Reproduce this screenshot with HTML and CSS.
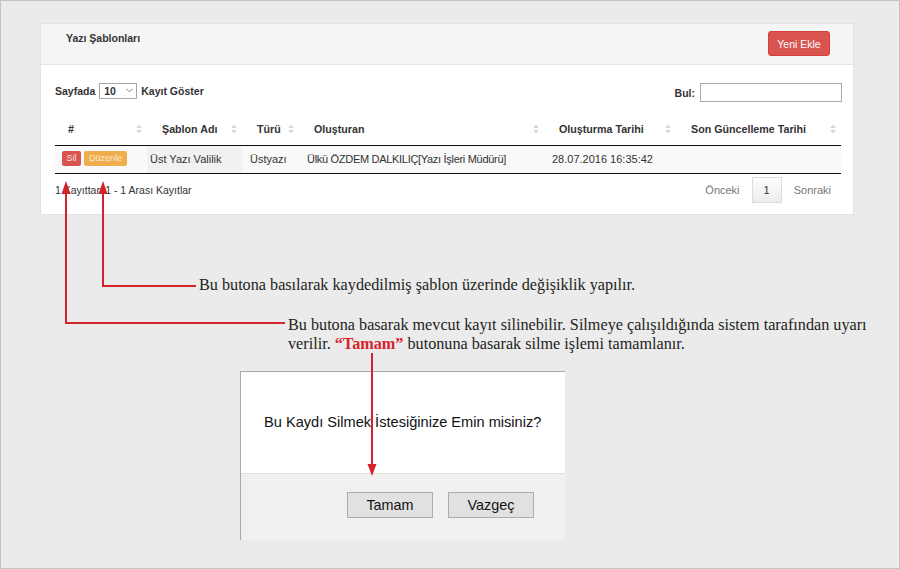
FILE: index.html
```html
<!DOCTYPE html>
<html lang="tr">
<head>
<meta charset="utf-8">
<title>Yazı Şablonları</title>
<link rel="stylesheet" href="styles.css">
</head>
<body>
<div class="frame">
  <section class="panel">
    <header class="panel-head">
      <h2 class="panel-title">Yazı Şablonları</h2>
      <button class="btn-add" type="button">Yeni Ekle</button>
    </header>
    <div class="panel-body">
      <div class="toolbar">
        <div class="len">
          <span>Sayfada</span>
          <span class="select"><span>10</span><svg class="chev" width="7" height="5" viewBox="0 0 7 5"><path d="M0.5 0.8 L3.5 3.8 L6.5 0.8" fill="none" stroke="#777" stroke-width="0.9"/></svg></span>
          <span>Kayıt Göster</span>
        </div>
        <div class="search">
          <span>Bul:</span>
          <input class="search-input" type="text">
        </div>
      </div>
      <table class="grid">
        <colgroup>
          <col class="c1"><col class="c2"><col class="c3"><col class="c4"><col class="c5"><col class="c6">
        </colgroup>
        <thead>
          <tr>
            <th class="first"><div class="th-in"><span>#</span><svg class="sort" width="6" height="10" viewBox="0 0 6 10"><path d="M3 0.5L5.8 4H0.2Z M3 9.5L0.2 6H5.8Z"/></svg></div></th>
            <th><div class="th-in"><span>Şablon Adı</span><svg class="sort" width="6" height="10" viewBox="0 0 6 10"><path d="M3 0.5L5.8 4H0.2Z M3 9.5L0.2 6H5.8Z"/></svg></div></th>
            <th><div class="th-in"><span>Türü</span><svg class="sort" width="6" height="10" viewBox="0 0 6 10"><path d="M3 0.5L5.8 4H0.2Z M3 9.5L0.2 6H5.8Z"/></svg></div></th>
            <th><div class="th-in"><span>Oluşturan</span><svg class="sort" width="6" height="10" viewBox="0 0 6 10"><path d="M3 0.5L5.8 4H0.2Z M3 9.5L0.2 6H5.8Z"/></svg></div></th>
            <th><div class="th-in"><span>Oluşturma Tarihi</span><svg class="sort" width="6" height="10" viewBox="0 0 6 10"><path d="M3 0.5L5.8 4H0.2Z M3 9.5L0.2 6H5.8Z"/></svg></div></th>
            <th><div class="th-in"><span>Son Güncelleme Tarihi</span><svg class="sort" width="6" height="10" viewBox="0 0 6 10"><path d="M3 0.5L5.8 4H0.2Z M3 9.5L0.2 6H5.8Z"/></svg></div></th>
          </tr>
        </thead>
        <tbody>
          <tr>
            <td class="actions"><span class="mini mini-red">Sil</span><span class="mini mini-orange">Düzenle</span></td>
            <td class="sorted">Üst Yazı Valilik</td>
            <td>Üstyazı</td>
            <td class="creator">Ülkü ÖZDEM DALKILIÇ[Yazı İşleri Müdürü]</td>
            <td>28.07.2016 16:35:42</td>
            <td></td>
          </tr>
        </tbody>
      </table>
      <div class="tfoot">
        <div class="info">1 Kayıttan 1 - 1 Arası Kayıtlar</div>
        <div class="pager">
          <span class="pg">Önceki</span>
          <span class="pg pg-cur">1</span>
          <span class="pg">Sonraki</span>
        </div>
      </div>
    </div>
  </section>

  <p class="note note1">Bu butona basılarak kaydedilmiş şablon üzerinde değişiklik yapılır.</p>
  <p class="note note2">Bu butona basarak mevcut kayıt silinebilir. Silmeye çalışıldığında sistem tarafından uyarı<br>verilir. <strong>“Tamam”</strong> butonuna basarak silme işlemi tamamlanır.</p>

  <div class="dialog">
    <div class="dlg-body">Bu Kaydı Silmek İstesiğinize Emin misiniz?</div>
    <div class="dlg-foot">
      <button class="dlg-btn" type="button">Tamam</button>
      <button class="dlg-btn" type="button">Vazgeç</button>
    </div>
  </div>

  <svg class="arrows" width="900" height="569" viewBox="0 0 900 569">
    <g fill="none" stroke="#d3232b" stroke-width="2">
      <path d="M66 192 V323 H285"/>
      <path d="M103 192 V286 H196"/>
      <path d="M372 353 V466"/>
    </g>
    <g fill="#d3232b">
      <polygon points="66,181 61.5,194 70.5,194"/>
      <polygon points="103,181 98.5,194 107.5,194"/>
      <polygon points="372,476 367.5,464 376.5,464"/>
    </g>
  </svg>
</div>
</body>
</html>
```

FILE: styles.css
```css
* { box-sizing: border-box; }

html, body {
  margin: 0;
  padding: 0;
}

body {
  background: #ebebeb;
  font-family: "Liberation Sans", Arial, sans-serif;
  color: #333;
}

.frame {
  position: relative;
  width: 900px;
  height: 569px;
  border: 1px solid #c3c3c3;
  background: #ebebeb;
  padding-top: 22px;
  overflow: hidden;
}

/* ---------- panel ---------- */
.panel {
  width: 814px;
  margin-left: 39px;
  background: #fff;
  border: 1px solid #e2e2e2;
}

.panel-head {
  display: flex;
  justify-content: space-between;
  align-items: flex-start;
  height: 41px;
  background: #f5f5f5;
  border-bottom: 1px solid #e3e3e3;
  padding: 0 23px 0 25px;
}

.panel-title {
  margin: 7px 0 0;
  font-size: 10.5px;
  line-height: 14px;
  font-weight: bold;
  color: #333;
}

.btn-add {
  margin-top: 7px;
  width: 62px;
  height: 25px;
  padding: 0;
  border: 1px solid #d43f3a;
  border-radius: 3px;
  background: #d9534f;
  color: #fff;
  font-family: "Liberation Sans", Arial, sans-serif;
  font-size: 10.5px;
}

.panel-body {
  padding: 18px 12px 11px 14px;
}

.toolbar {
  display: flex;
  justify-content: space-between;
  align-items: center;
  height: 19px;
  font-size: 10.5px;
  font-weight: bold;
  color: #333;
}

.len {
  display: flex;
  align-items: center;
  gap: 4px;
  margin-top: -4px;
}

.select {
  display: flex;
  align-items: center;
  justify-content: space-between;
  width: 38px;
  height: 16px;
  border: 1px solid #a6a6a6;
  padding: 0 3px 0 4px;
  font-weight: bold;
  background: #fff;
}

.chev { display: block; }

.search {
  display: flex;
  align-items: center;
  gap: 5px;
  margin-right: -1px;
}

.search-input {
  width: 142px;
  height: 19px;
  border: 1px solid #aaa;
  margin: 0;
  padding: 0 3px;
  background: #fff;
}

/* ---------- table ---------- */
.grid {
  width: 786px;
  margin-top: 13px;
  border-collapse: collapse;
  table-layout: fixed;
  font-size: 11px;
}

.c1 { width: 92px; }
.c2 { width: 95px; }
.c3 { width: 57px; }
.c4 { width: 245px; }
.c5 { width: 132px; }
.c6 { width: 165px; }

.grid th {
  height: 30px;
  padding: 0 5px 1px 15px;
  border-bottom: 1px solid #111;
  text-align: left;
  font-size: 10.7px;
  font-weight: bold;
  color: #333;
}

.grid th.first { padding-left: 13px; }

.th-in {
  display: flex;
  justify-content: space-between;
  align-items: center;
}

.sort { fill: #d6d6d6; display: block; }

.grid td {
  height: 28px;
  padding: 0 0 1px 8px;
  border-bottom: 1px solid #111;
  background: #f9f9f9;
  color: #333;
  white-space: nowrap;
}

.grid td.sorted {
  background: #f1f1f1;
  padding-left: 3px;
}

.grid td.creator { letter-spacing: -0.3px; }

.grid td.actions { padding-left: 7px; }

.mini {
  display: inline-block;
  height: 15px;
  line-height: 15px;
  vertical-align: middle;
  border-radius: 2px;
  font-size: 9px;
  letter-spacing: 0;
}

.mini-red {
  background: #d9534f;
  color: #fbe3e2;
  padding: 0 4.5px;
}

.mini-orange {
  background: #f0ad4e;
  color: #fce9cc;
  padding: 0 5px;
  margin-left: 3px;
}

/* ---------- footer ---------- */
.tfoot {
  display: flex;
  justify-content: space-between;
  align-items: center;
  height: 26px;
  margin-top: 3px;
  font-size: 11px;
}

.info {
  color: #333;
  font-size: 10.5px;
}

.pager {
  display: flex;
  align-items: center;
  margin-right: -2px;
}

.pg {
  display: flex;
  align-items: center;
  height: 26px;
  padding: 0 12px;
  color: #777;
}

.pg-cur {
  padding: 0 11px;
  border: 1px solid #dcdcdc;
  background: linear-gradient(#fdfdfd, #ececec);
  color: #333;
}

/* ---------- notes ---------- */
.note {
  margin: 0;
  font-family: "Liberation Serif", "Times New Roman", serif;
  font-size: 16.2px;
  line-height: 19px;
  color: #231f20;
}

.note1 {
  margin-top: 61px;
  margin-left: 198px;
}

.note2 {
  margin-top: 21px;
  margin-left: 287px;
}

.note strong { color: #d7232b; }

/* ---------- dialog ---------- */
.dialog {
  width: 325px;
  margin-top: 17px;
  margin-left: 239px;
  border-top: 1px solid #a8a8a8;
  border-left: 1px solid #a8a8a8;
  background: #fff;
}

.dlg-body {
  display: flex;
  align-items: center;
  height: 101px;
  padding-left: 23px;
  font-size: 14.6px;
  color: #111;
}

.dlg-foot {
  display: flex;
  justify-content: flex-end;
  align-items: flex-start;
  gap: 15px;
  height: 67px;
  padding: 18px 31px 0 0;
  border-top: 1px solid #dfdfdf;
  background: #f0f0f0;
}

.dlg-btn {
  width: 86px;
  height: 26px;
  margin: 0;
  padding: 0;
  border: 1px solid #adadad;
  background: #e1e1e1;
  color: #111;
  font-family: "Liberation Sans", Arial, sans-serif;
  font-size: 14.4px;
}

/* ---------- annotation arrows ---------- */
.arrows {
  position: absolute;
  top: -1px;
  left: -1px;
  pointer-events: none;
}
```
